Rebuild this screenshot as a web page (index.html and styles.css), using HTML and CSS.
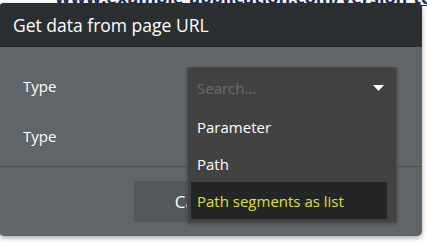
FILE: index.html
```html
<!DOCTYPE html>
<html lang="en">
<head>
    <meta charset="UTF-8">
    <title>Get data from page URL</title>
    <link rel="stylesheet" href="styles.css">
</head>
<body>
    <div class="behind">www.example-application.com/version-test/page_url_segments</div>

    <div class="modal">
        <div class="modal-header">Get data from page URL</div>

        <div class="modal-body">
            <div class="field-row"><span class="label">Type</span></div>
            <div class="field-row"><span class="label">Type</span></div>
        </div>

        <div class="modal-footer">
            <button class="btn">Cancel</button>
        </div>

        <div class="dropdown">
            <div class="search">
                <span class="placeholder">Search...</span>
                <svg class="caret" width="11" height="6" viewBox="0 0 11 6"><path d="M0 0h11L5.5 6z" fill="#fff"/></svg>
            </div>
            <div class="options">
                <div class="option">Parameter</div>
                <div class="option">Path</div>
                <div class="option selected">Path segments as list</div>
            </div>
        </div>
    </div>
</body>
</html>
```

FILE: styles.css
```css
body {
    margin: 0;
    background: #fff;
    font-family: "Open Sans", sans-serif;
    overflow: hidden;
}

.behind {
    margin: -15px 0 0 55px;
    font-size: 18px;
    font-weight: bold;
    color: #1d2b4f;
    text-decoration: underline;
    white-space: nowrap;
}

.modal {
    position: absolute;
    left: -1px;
    top: 3px;
    width: 423px;
    height: 233px;
    background: #5f6569;
    border-radius: 5px;
    box-shadow: 0 2px 5px rgba(0,0,0,0.35);
    overflow: hidden;
}

.modal-header {
    height: 44px;
    background: #2b2f31;
    color: #fff;
    font-size: 17.5px;
    line-height: 44px;
    padding-left: 14px;
}

.modal-body {
    padding: 14px 0 5px;
    border-bottom: 1px solid #4c5154;
}

.field-row {
    height: 50px;
    display: flex;
    align-items: center;
    padding-left: 24px;
}

.label {
    color: #fff;
    font-size: 15px;
}

.modal-footer {
    padding: 14px 0 0 135px;
}

.btn {
    width: 134px;
    height: 41px;
    border: none;
    background: #53585b;
    color: #fff;
    font-family: "Open Sans", sans-serif;
    font-size: 17px;
}

.dropdown {
    position: absolute;
    left: 188px;
    top: 64px;
    width: 208px;
    height: 154px;
    background: #424242;
    border: 1px solid #4d4d4d;
    box-shadow: 0 1px 3px rgba(0,0,0,0.25);
}

.search {
    height: 40px;
    display: flex;
    align-items: center;
    justify-content: space-between;
    padding: 0 12px 0 9px;
}

.placeholder {
    color: #6c6c6c;
    font-size: 15px;
}

.options {
    padding: 0 9px 0 3px;
}

.option {
    height: 37px;
    display: flex;
    align-items: center;
    padding-left: 6px;
    color: #fff;
    font-size: 15px;
}

.option.selected {
    background: #232527;
    color: #dfe02c;
}
```
